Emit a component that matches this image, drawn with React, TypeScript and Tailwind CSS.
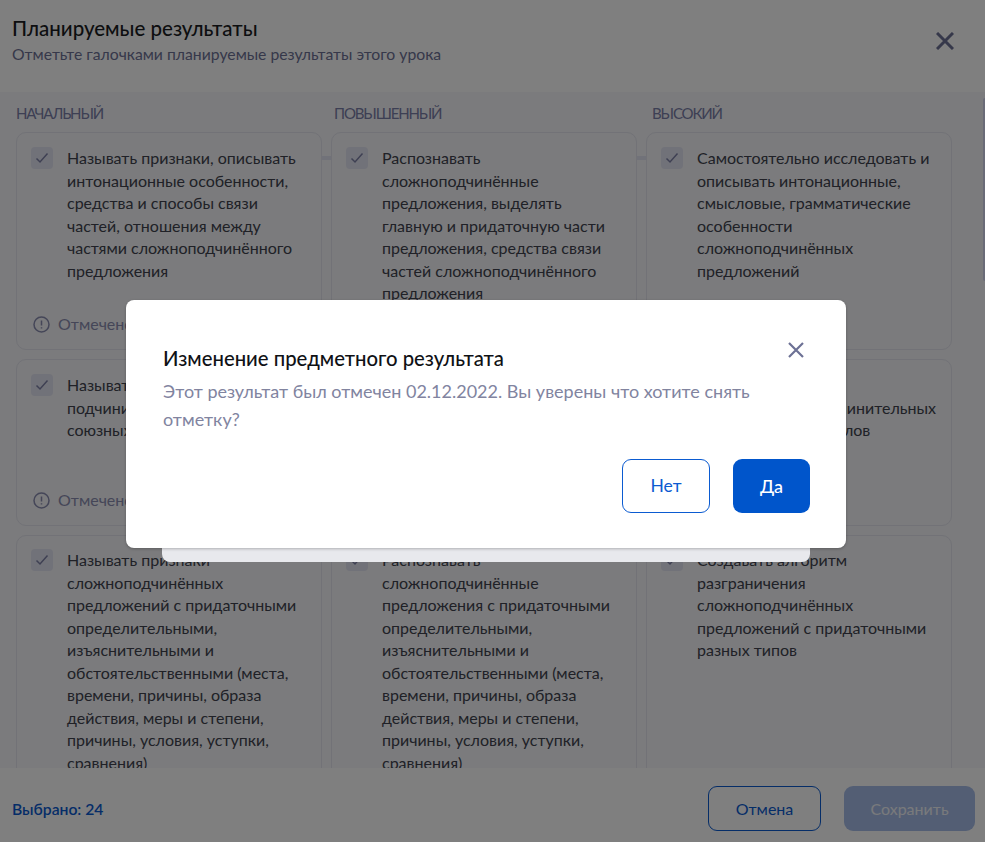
import React from "react";

const levels = ["Начальный", "Повышенный", "Высокий"];

type C = { text: string; marked?: boolean; link?: boolean };

const rows: { h: string; cards: C[] }[] = [
  {
    h: "h-[218px] pt-[14px]",
    cards: [
      { text: "Называть признаки, описывать интонационные особенности, средства и способы связи частей, отношения между частями сложноподчинённого предложения", marked: true, link: true },
      { text: "Распознавать сложноподчинённые предложения, выделять главную и придаточную части предложения, средства связи частей сложноподчинённого предложения", link: true },
      { text: "Самостоятельно исследовать и описывать интонационные, смысловые, грамматические особенности сложноподчинённых предложений" },
    ],
  },
  {
    h: "h-[167px] pt-[14px]",
    cards: [
      { text: "Называть признаки подчинительных союзов и союзных слов", marked: true },
      { text: "Распознавать средства подчинительной связи" },
      { text: "Различать средства\u00a0связи\u00a0подчинительных союзов и союзных слов" },
    ],
  },
  {
    h: "h-[260px] pt-[13px]",
    cards: [
      { text: "Называть признаки сложноподчинённых предложений с придаточными определительными, изъяснительными и обстоятельственными (места, времени, причины, образа действия, меры и степени, причины, условия, уступки, сравнения)" },
      { text: "Распознавать сложноподчинённые предложения с придаточными определительными, изъяснительными и обстоятельственными (места, времени, причины, образа действия, меры и степени, причины, условия, уступки, сравнения)" },
      { text: "Создавать алгоритм разграничения сложноподчинённых предложений с придаточными разных типов" },
    ],
  },
];

function Check() {
  return (
    <span className="flex h-[22px] w-[22px] shrink-0 items-center justify-center rounded-[4px] bg-[#e3e4f2]">
      <svg width="14" height="12" viewBox="0 0 14 12" fill="none">
        <path d="M1.5 6.5 L5 10 L12.5 1.5" stroke="#7d80a6" strokeWidth="1.5" />
      </svg>
    </span>
  );
}

function Card({ c, h }: { c: C; h: string }) {
  return (
    <div className={`relative flex flex-col rounded-[10px] border border-[#e4e5ee] pl-[14px] pb-[14px] ${h}`}>
      <div className="flex items-start gap-[14px]">
        <Check />
        <p className="pr-[15px] text-[16px] leading-[22.5px] text-[#40434e]">{c.text}</p>
      </div>
      {c.marked && (
        <div className="mt-auto flex items-center gap-[8px] pl-[2px] text-[16px] leading-[22px] text-[#8a8db0]">
          <svg width="17" height="17" viewBox="0 0 17 17" fill="none" stroke="#8a8db0" strokeWidth="1.5">
            <circle cx="8.5" cy="8.5" r="7.5" />
            <path d="M8.5 4.5v5M8.5 11.2v1.4" />
          </svg>
          <span>Отмечено 02.12.2022</span>
        </div>
      )}
      {c.link && <span className="absolute right-[-10px] top-[23px] h-[4px] w-[9px] bg-[#e3e4f2]" />}
    </div>
  );
}

export default function App() {
  return (
    <div className="relative flex h-[842px] w-[985px] flex-col overflow-hidden bg-white font-['Lato','Liberation_Sans',sans-serif]">
      <header className="relative h-[92px] shrink-0 bg-white px-3 pt-[15px]">
        <h1 className="text-[20.5px] font-medium leading-[27px] text-[#1a1c22]">Планируемые результаты</h1>
        <p className="text-[15.75px] leading-[24px] text-[#6d7195]">Отметьте галочками планируемые результаты этого урока</p>
        <svg className="absolute left-[936px] top-[32px]" width="18" height="18" viewBox="0 0 18 18" fill="none" stroke="#6d7195" strokeWidth="3">
          <path d="M1 1 L17 17 M17 1 L1 17" />
        </svg>
      </header>

      <main className="relative flex-1 overflow-hidden bg-[#f6f6fa] pl-4 pr-[33px] pt-[10px]">
        <div className="grid grid-cols-[318px_318px_1fr]">
          {levels.map((l) => (
            <div key={l} className="h-[30px] text-[15px] uppercase leading-[22px] tracking-[-1.15px] text-[#7a7ea8]">{l}</div>
          ))}
        </div>
        <div className="grid grid-cols-3 gap-[9px]">
          {rows.map((r) => r.cards.map((c, i) => <Card key={c.text + i} c={c} h={r.h} />))}
        </div>
        <span className="absolute right-0 top-[6px] h-[183px] w-[2px] rounded-l-[2px] bg-[#d4d6ee]" />
      </main>

      <footer className="flex h-[74px] shrink-0 items-start justify-between bg-white pl-3 pr-[10px] pt-[18px]">
        <span className="pt-[11px] text-[15.7px] font-semibold leading-[24px] text-[#0b5bd1]">Выбрано: 24</span>
        <div className="flex gap-[23px]">
          <button className="h-[45px] w-[113px] rounded-[9px] border border-[#0b5bd1] text-[16px] text-[#0b5bd1]">Отмена</button>
          <button className="h-[45px] w-[131px] rounded-[9px] bg-[#a7bde8] text-[16px] text-[#f2f4f8]">Сохранить</button>
        </div>
      </footer>

      <div className="absolute inset-0 bg-black/50" />
      <div className="absolute left-[162px] top-[500px] h-[62px] w-[648px] rounded-[8px] bg-[#e8e9ed]" />

      <div className="absolute left-[126px] top-[300px] flex h-[248px] w-[720px] flex-col rounded-[8px] bg-white pl-[37px] pr-[36px] pt-[44px] shadow-[0_1px_3px_rgba(0,0,0,0.25)]">
        <h2 className="text-[20.3px] font-medium leading-[28px] text-[#0f1115]">Изменение предметного результата</h2>
        <p className="mt-[5px] text-[18px] leading-[28px] text-[#81849f]">Этот результат был отмечен 02.12.2022. Вы уверены что хотите снять отметку?</p>
        <svg className="absolute left-[662px] top-[42px]" width="16" height="16" viewBox="0 0 16 16" fill="none" stroke="#6d7195" strokeWidth="2.2">
          <path d="M1 1 L15 15 M15 1 L1 15" />
        </svg>
        <div className="mt-auto mb-[35px] flex justify-end gap-[23px]">
          <button className="h-[54px] w-[88px] rounded-[9px] border border-[#0b5bd1] text-[17.5px] text-[#0b5bd1]">Нет</button>
          <button className="h-[54px] w-[77px] rounded-[9px] bg-[#0055cb] text-[18px] font-medium text-white">Да</button>
        </div>
      </div>
    </div>
  );
}
